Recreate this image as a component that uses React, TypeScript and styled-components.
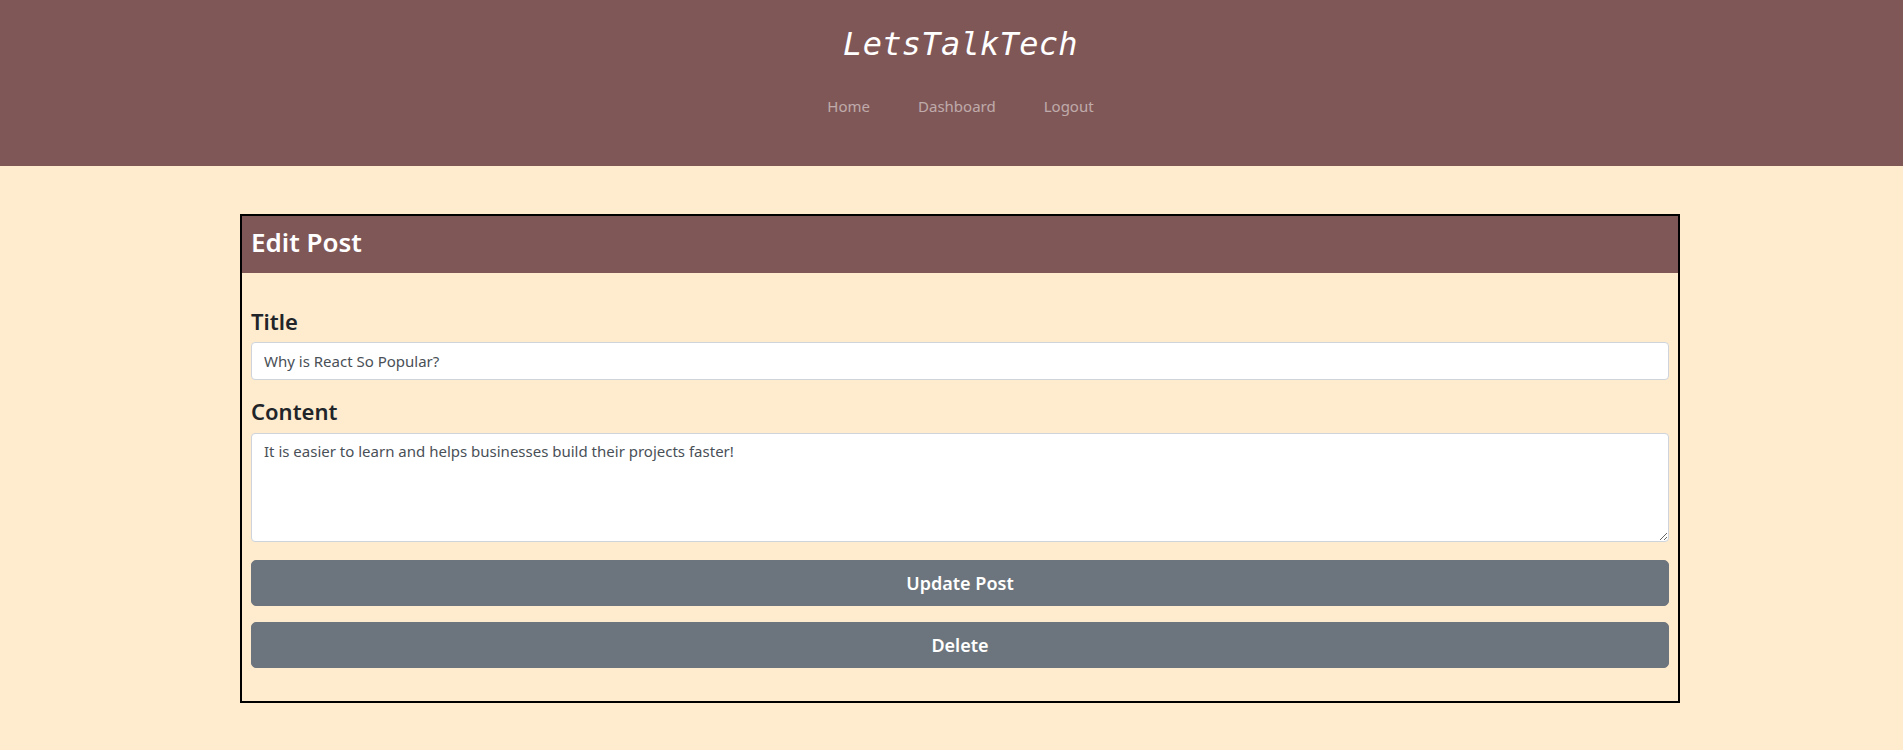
import React from "react";
import styled, { createGlobalStyle } from "styled-components";

const GlobalStyle = createGlobalStyle`
  * { box-sizing: border-box; }
  html, body { margin: 0; padding: 0; }
  body {
    background: #ffebcd;
    font-family: "Noto Sans", "Open Sans", sans-serif;
    color: #212529;
    font-size: 16px;
  }
`;

const Header = styled.header`
  background: #805757;
  height: 166px;
  display: flex;
  flex-direction: column;
  align-items: center;
  padding-top: 25px;
  padding-left: 18px;
`;

const Brand = styled.h1`
  margin: 0;
  font-family: "DejaVu Sans Mono", "Liberation Mono", monospace;
  font-style: italic;
  font-weight: 400;
  font-size: 32px;
  line-height: 1.2;
  color: #ffffff;
  letter-spacing: 0.3px;
`;

const Nav = styled.nav`
  display: flex;
  margin-top: 24px;
`;

const NavLink = styled.a`
  color: rgba(255, 255, 255, 0.5);
  text-decoration: none;
  font-size: 15px;
  padding: 8px 24px;
  line-height: 1.5;
`;

const Main = styled.main`
  padding: 48px 240px;
`;

const Card = styled.section`
  border: 2px solid #000;
  width: 1440px;
`;

const CardHeader = styled.div`
  background: #805757;
  height: 57px;
  display: flex;
  align-items: center;
  padding: 0 9px;
`;

const CardTitle = styled.h3`
  margin: 0 0 3px;
  color: #fff;
  font-size: 26px;
  font-weight: 600;
  line-height: 1.2;
`;

const Form = styled.form`
  display: flex;
  flex-direction: column;
  padding: 35px 9px 33px;
`;

const Label = styled.label`
  font-size: 22px;
  font-weight: 600;
  line-height: 1.2;
  color: #212529;
  margin-bottom: 8px;
`;

const Field = styled.div<{ $gap?: number }>`
  display: flex;
  flex-direction: column;
  margin-bottom: ${(p) => p.$gap ?? 16}px;
`;

const Input = styled.input`
  height: 38px;
  padding: 6px 12px;
  font-family: inherit;
  font-size: 15px;
  color: #495057;
  background: #fff;
  border: 1px solid #ced4da;
  border-radius: 4px;
  outline: none;
`;

const TextArea = styled.textarea`
  height: 109px;
  padding: 6px 12px;
  font-family: inherit;
  font-size: 15px;
  line-height: 1.5;
  color: #495057;
  background: #fff;
  border: 1px solid #ced4da;
  border-radius: 4px;
  outline: none;
  resize: vertical;
`;

const Button = styled.button`
  height: 46px;
  background: #6c757d;
  border: 1px solid #6c757d;
  border-radius: 5px;
  color: #fff;
  font-family: inherit;
  font-size: 18px;
  font-weight: 600;
  cursor: pointer;
  & + & {
    margin-top: 16px;
  }
`;

export default function App() {
  return (
    <>
      <GlobalStyle />
      <Header>
        <Brand>LetsTalkTech</Brand>
        <Nav>
          <NavLink href="#">Home</NavLink>
          <NavLink href="#">Dashboard</NavLink>
          <NavLink href="#">Logout</NavLink>
        </Nav>
      </Header>
      <Main>
        <Card>
          <CardHeader>
            <CardTitle>Edit Post</CardTitle>
          </CardHeader>
          <Form onSubmit={(e) => e.preventDefault()}>
            <Field $gap={18}>
              <Label htmlFor="title">Title</Label>
              <Input id="title" defaultValue="Why is React So Popular?" />
            </Field>
            <Field $gap={18}>
              <Label htmlFor="content">Content</Label>
              <TextArea
                id="content"
                defaultValue="It is easier to learn and helps businesses build their projects faster!"
              />
            </Field>
            <Button type="submit">Update Post</Button>
            <Button type="button">Delete</Button>
          </Form>
        </Card>
      </Main>
    </>
  );
}
